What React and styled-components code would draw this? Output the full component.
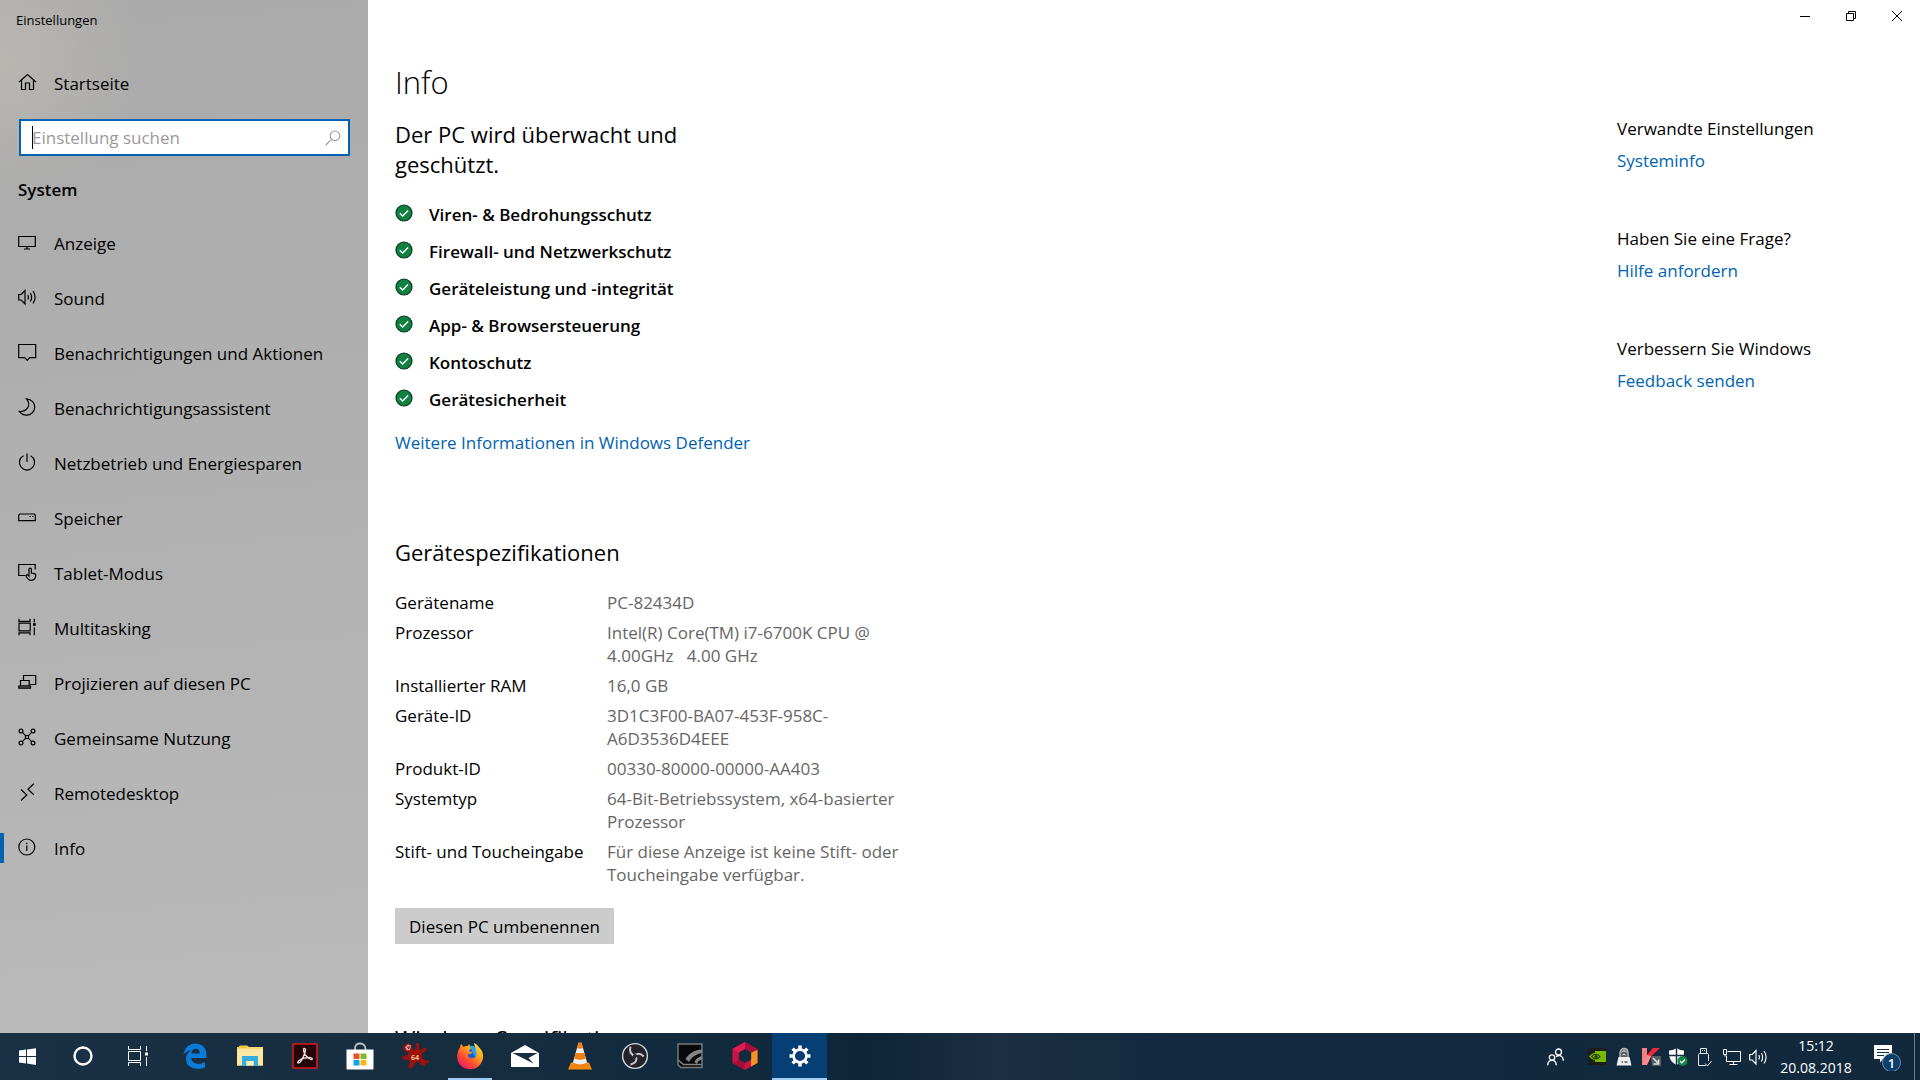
import React from "react";
import styled, { createGlobalStyle } from "styled-components";

const navItems = [
  { label: "Anzeige", icon: "display" },
  { label: "Sound", icon: "sound" },
  { label: "Benachrichtigungen und Aktionen", icon: "message" },
  { label: "Benachrichtigungsassistent", icon: "moon" },
  { label: "Netzbetrieb und Energiesparen", icon: "power" },
  { label: "Speicher", icon: "storage" },
  { label: "Tablet-Modus", icon: "tablet" },
  { label: "Multitasking", icon: "multitask" },
  { label: "Projizieren auf diesen PC", icon: "project" },
  { label: "Gemeinsame Nutzung", icon: "share" },
  { label: "Remotedesktop", icon: "remote" },
  { label: "Info", icon: "info", active: true },
];

const protections = [
  "Viren- & Bedrohungsschutz",
  "Firewall- und Netzwerkschutz",
  "Geräteleistung und -integrität",
  "App- & Browsersteuerung",
  "Kontoschutz",
  "Gerätesicherheit",
];

const specs = [
  ["Gerätename", "PC-82434D"],
  ["Prozessor", "Intel(R) Core(TM) i7-6700K CPU @ 4.00GHz \u00a0 4.00 GHz"],
  ["Installierter RAM", "16,0 GB"],
  ["Geräte-ID", "3D1C3F00-BA07-453F-958C-A6D3536D4EEE"],
  ["Produkt-ID", "00330-80000-00000-AA403"],
  ["Systemtyp", "64-Bit-Betriebssystem, x64-basierter Prozessor"],
  [
    "Stift- und Toucheingabe",
    "Für diese Anzeige ist keine Stift- oder Toucheingabe verfügbar.",
  ],
];

const related = [
  ["Verwandte Einstellungen", "Systeminfo"],
  ["Haben Sie eine Frage?", "Hilfe anfordern"],
  ["Verbessern Sie Windows", "Feedback senden"],
];

const App = () => {
  return (
    <>
      <GlobalStyle />
      <Desktop>
        <SettingsWindow>
          <Sidebar />
          <Main>
            <CaptionBar>
              <CaptionButton aria-label="Minimieren">
                <svg width="10" height="10" viewBox="0 0 10 10">
                  <path d="M0 5.5h10" stroke="#000" />
                </svg>
              </CaptionButton>
              <CaptionButton aria-label="Verkleinern">
                <svg width="10" height="10" viewBox="0 0 10 10">
                  <path
                    d="M.5 2.5h7v7h-7zM2.5 2.5v-2h7v7h-2"
                    fill="none"
                    stroke="#000"
                  />
                </svg>
              </CaptionButton>
              <CaptionButton aria-label="Schließen">
                <svg width="10" height="10" viewBox="0 0 10 10">
                  <path d="M0 0l10 10M10 0L0 10" stroke="#000" />
                </svg>
              </CaptionButton>
            </CaptionBar>
            <Page>
              <Content>
                <Title>Info</Title>
                <Subtitle>Der PC wird überwacht und geschützt.</Subtitle>
                <StatusList>
                  {protections.map((text) => (
                    <StatusItem key={text}>
                      <CheckBadge />
                      <span>{text}</span>
                    </StatusItem>
                  ))}
                </StatusList>
                <DefenderLink href="#defender">
                  Weitere Informationen in Windows Defender
                </DefenderLink>
                <SectionTitle>Gerätespezifikationen</SectionTitle>
                <SpecTable>
                  <tbody>
                    {specs.map(([name, value]) => (
                      <tr key={name}>
                        <SpecName scope="row">{name}</SpecName>
                        <SpecValue>{value}</SpecValue>
                      </tr>
                    ))}
                  </tbody>
                </SpecTable>
                <RenameButton>Diesen PC umbenennen</RenameButton>
                <SectionTitle>Windows-Spezifikationen</SectionTitle>
              </Content>
              <Related>
                {related.map(([heading, link]) => (
                  <RelatedGroup key={heading}>
                    <h3>{heading}</h3>
                    <Link href="#hilfe">{link}</Link>
                  </RelatedGroup>
                ))}
              </Related>
            </Page>
          </Main>
        </SettingsWindow>
        <Taskbar />
      </Desktop>
    </>
  );
};

const GlobalStyle = createGlobalStyle`
  * {
    box-sizing: border-box;
  }

  body {
    margin: 0;
    font-family: "Open Sans", "Noto Sans", sans-serif;
    font-size: 17px;
    line-height: 23px;
    color: #000;
    background: #fff;
    overflow: hidden;
  }

  button, input {
    font: inherit;
    color: inherit;
    border: 0;
    padding: 0;
    background: none;
  }

  svg {
    display: block;
    flex-shrink: 0;
  }
`;

const Desktop = styled.div`
  display: flex;
  flex-direction: column;
  height: 100vh;
`;

const SettingsWindow = styled.div`
  display: flex;
  flex: 1;
  min-height: 0;
  overflow: hidden;
`;

const Main = styled.main`
  flex: 1;
  display: flex;
  flex-direction: column;
  min-width: 0;
  overflow: hidden;
`;

const CaptionBar = styled.div`
  display: flex;
  justify-content: flex-end;
  flex-shrink: 0;
`;

const CaptionButton = styled.button`
  display: flex;
  align-items: center;
  justify-content: center;
  width: 46px;
  height: 32px;

  &:hover {
    background: #e5e5e5;
  }
`;

const Page = styled.div`
  display: flex;
  justify-content: space-between;
  flex: 1;
  min-height: 0;
  padding-left: 27px;
`;

const Content = styled.div`
  flex: 1;
  max-width: 520px;
  padding-top: 30px;
`;

const Title = styled.h1`
  margin: 0;
  font-size: 31px;
  font-weight: 300;
  line-height: 40px;
`;

const Subtitle = styled.h2`
  max-width: 300px;
  margin: 17px 0 0;
  font-size: 22px;
  font-weight: 400;
  line-height: 30px;
`;

const SectionTitle = styled(Subtitle)`
  margin-top: 79px;
`;

const StatusList = styled.ul`
  list-style: none;
  margin: 17px 0 13px;
  padding: 0;
`;

const StatusItem = styled.li`
  display: flex;
  align-items: center;
  gap: 16px;
  height: 37px;
  font-weight: 600;

  svg {
    margin-bottom: 4px;
  }
`;

const Link = styled.a`
  color: #0063b1;
  text-decoration: none;

  &:hover {
    color: #666;
  }
`;

const DefenderLink = styled(Link)`
  display: block;
  padding-bottom: 4px;
`;

const SpecTable = styled.table`
  width: 100%;
  margin-top: 24px;
  border-collapse: collapse;
`;

const SpecName = styled.th`
  width: 212px;
  padding: 0 0 7px;
  font-weight: 400;
  text-align: left;
  vertical-align: top;
`;

const SpecValue = styled.td`
  padding: 0 10px 7px 0;
  color: #666;
  vertical-align: top;
`;

const RenameButton = styled.button`
  display: block;
  height: 36px;
  margin-top: 15px;
  padding: 0 14px;
  background: #ccc;
`;

const Related = styled.aside`
  width: 303px;
  padding-top: 85px;
`;

const RelatedGroup = styled.section`
  margin-bottom: 55px;

  h3 {
    margin: 0 0 9px;
    font: inherit;
  }
`;

const CheckBadge = () => (
  <svg width="18" height="18" viewBox="0 0 18 18">
    <circle cx="9" cy="9" r="8" fill="#108043" stroke="#0b3a20" strokeWidth="1.2" />
    <path d="M4.8 9.2l2.9 2.8 5.4-5.4" fill="none" stroke="#fff" strokeWidth="1.4" />
  </svg>
);

/* Sidebar */

const Sidebar = () => {
  return (
    <SidebarPane>
      <WindowTitle>Einstellungen</WindowTitle>
      <HomeLink href="#start">
        <NavIcon name="home" />
        Startseite
      </HomeLink>
      <SearchBox>
        <input
          type="text"
          aria-label="Einstellung suchen"
          placeholder="Einstellung suchen"
          autoFocus
        />
        <svg width="16" height="16" viewBox="0 0 16 16">
          <g fill="none" stroke="#999" strokeWidth="1.1">
            <circle cx="10" cy="5.8" r="4.8" />
            <path d="M6.5 9.3L.8 15" />
          </g>
        </svg>
      </SearchBox>
      <GroupTitle>System</GroupTitle>
      <nav>
        {navItems.map((item) => (
          <NavLink href="#einstellung" key={item.label} $active={item.active}>
            <NavIcon name={item.icon} />
            {item.label}
          </NavLink>
        ))}
      </nav>
    </SidebarPane>
  );
};

const SidebarPane = styled.aside`
  width: 368px;
  flex-shrink: 0;
  background: radial-gradient(circle at 0 60px, #b9b7b2 0, rgba(184, 183, 180, 0) 140px),
    linear-gradient(175deg, #aaa 0%, #b0b0b0 45%, #bababa 100%);
`;

const WindowTitle = styled.div`
  padding: 9px 16px;
  font-size: 13px;
  line-height: 22px;
`;

const NavLink = styled.a`
  display: flex;
  align-items: center;
  gap: 17px;
  height: 55px;
  padding-left: 14px;
  border-left: 4px solid ${(props) => (props.$active ? "#0063b1" : "transparent")};
  border-image: ${(props) =>
    props.$active
      ? "linear-gradient(transparent 13px, #0063b1 13px, #0063b1 41px, transparent 41px) 1"
      : "none"};
  color: #000;
  text-decoration: none;

  svg {
    margin-bottom: 3px;
  }
`;

const HomeLink = styled(NavLink)`
  margin-top: 16px;
`;

/* ::before is the text caret, drawn so that it does not blink */
const SearchBox = styled.label`
  display: flex;
  align-items: center;
  height: 37px;
  margin: 8px 18px 0 19px;
  padding: 0 7px 0 11px;
  background: #fff;
  border: 2px solid #0063b1;

  &::before {
    content: "";
    width: 1px;
    height: 23px;
    margin-right: -1px;
    background: #000;
  }

  input {
    flex: 1;
    min-width: 0;
    outline: 0;
    caret-color: transparent;
  }

  input::placeholder {
    color: #999;
    opacity: 1;
  }
`;

const GroupTitle = styled.h2`
  margin: 22px 18px 15px;
  font-size: 17px;
  font-weight: 600;
  line-height: 23px;
`;

const navDrawings = {
  home: <path d="M1 9L9.500 1.500 18 9M3.500 7v9.500h4V10h4v6.500h4V7" />,
  display: <path d="M.7 3.500h16.600v10H.7zM9 13.500v2.500M6 16h6" />,
  sound: (
    <path d="M.7 6.500h2.500L7 2.500v13.500l-3.800-4H.7zM9.800 7c.8 1.500.8 3 0 4.500M12.300 5c1.700 2.700 1.700 5.800 0 8.500M15 3c2.700 4 2.700 8.500 0 12.500" />
  ),
  message: <path d="M.7 1.500h17v13.200h-6l-2.500 2.600-2.500-2.600h-6z" />,
  moon: <path d="M8.500.8c5 .5 8.500 4 8.300 8.500-.3 4.500-4 8-8.500 7.800-3 0-5.300-1.300-7-3.700 3.400.4 6.300-.6 8.100-3.200C11.500 7 10.900 3.500 8.500.8z" />,
  power: <path d="M9 .5v8.500M5.500 2.700a7.600 7.600 0 1 0 7 0" />,
  storage: <path d="M1.700 6h14.600l1 1.300v5.400H.7V7.300zM11.500 8.500h1.500M14 8.500h1.500" />,
  tablet: (
    <g>
      <path d="M7.500 12.500H.7V1.500h16.500v5" />
      <path d="M11 12V6.300c0-1.700 2.400-1.700 2.400 0V10l3 .6c1 .2 1.500.8 1.400 1.800-.3 3-1.600 4.900-4.500 4.900-2.500 0-3.800-1.300-5-3.800-.5-1.500 1-2.500 2.700-.5z" />
    </g>
  ),
  multitask: (
    <g>
      <path d="M1 .8v2.500h11V.8M1 17.300v-2.500h11v2.500M1 5.200h11.200v7.600H1zM16.300.8v3.700M16.300 9.500v7.800" />
      <path d="M15 5.200h2.700v2.600H15z" fill="currentColor" stroke="none" />
    </g>
  ),
  project: (
    <g>
      <path d="M5.500 7.500V2.500h12.200v9H12M2.500 7.500h8.700v5.500H2.500z" />
      <path d="M.8 13h11.700v2.200H.8z" fill="#777" />
    </g>
  ),
  share: (
    <g>
      <path d="M4.300 4.300l9.400 9.400M13.700 4.300l-9.400 9.400" />
      <circle cx="3" cy="3" r="1.900" />
      <circle cx="15" cy="3" r="1.900" />
      <circle cx="3" cy="15" r="1.900" />
      <circle cx="15" cy="15" r="1.900" />
      <path d="M7.500 7.500h3v3h-3z" fill="#aaa" />
    </g>
  ),
  remote: <path d="M3 6.500l5.800 5.500L3 17.500M15.800.8L10 6.300l5.800 5.500" />,
  info: (
    <g>
      <circle cx="8.800" cy="9" r="8" />
      <path d="M8.800 7.500v5.500M8.800 4.800v1.400" />
    </g>
  ),
};

const NavIcon = ({ name }) => (
  <svg
    width="19"
    height="18"
    viewBox="0 0 19 18"
    fill="none"
    stroke="currentColor"
    strokeWidth="1.200"
  >
    {navDrawings[name]}
  </svg>
);

/* Taskbar */

const Taskbar = () => {
  return (
    <Bar>
      <SystemButtons>
        <TaskButton aria-label="Start">
          <svg width="17" height="17" viewBox="0 0 17 17" fill="#fff">
            <path d="M0 2.600l7-1v6.500H0zM8 1.500L17 .2v7.900H8zM0 9h7v6.500l-7-1zM8 9h9v7.900L8 15.600z" />
          </svg>
        </TaskButton>
        <TaskButton aria-label="Cortana">
          <svg width="20" height="20" viewBox="0 0 20 20">
            <circle cx="10" cy="10" r="8.500" fill="none" stroke="#fff" strokeWidth="2.400" />
          </svg>
        </TaskButton>
        <TaskButton aria-label="Taskansicht">
          <svg width="20" height="20" viewBox="0 0 20 20" fill="none" stroke="#fff">
            <path d="M.5 0v3.500h12V0M.5 20v-3.500h12V20M.5 5.500h12v9H.5zM18.500 0v5M18.500 11v9" />
            <path d="M17 6.500h3v3h-3z" fill="#fff" stroke="none" />
          </svg>
        </TaskButton>
      </SystemButtons>
      <PinnedApps>
        <TaskButton aria-label="Microsoft Edge">
          <svg width="24" height="26" viewBox="0 0 24 26">
            <path
              d="M.5 11.800C1.300 5 6 .5 12.400.5 19.500.5 23.500 5.500 23.500 12v3H8.200c.2 4 3.600 5.800 7.500 5.800 2.500 0 4.500-.7 6.300-1.800v5.200c-2.200 1-4.700 1.600-7.400 1.600C7.300 25.800 3 21.800 3 16c0-4 2-7 5.500-8.700-3.500.3-6.300 2-8 4.500zM8.400 10.500h8.400c0-2.800-1.300-4.700-4-4.700-2.500 0-4 2-4.400 4.700z"
              fill="#0a7bd7"
            />
          </svg>
        </TaskButton>
        <TaskButton aria-label="Explorer">
          <svg width="26" height="22" viewBox="0 0 26 22">
            <path d="M0 2h1.500L3 .5h7L12 2h14v18.500H0z" fill="#f7d774" />
            <path d="M0 4h26v16.500H0z" fill="#fbe7a2" />
            <path d="M2 1h8v2H2z" fill="#f6c526" />
            <path d="M5 11h16v10h-4.500v-5h-7v5H5z" fill="#35aee2" />
            <path d="M9.500 16h7v4.500h-7z" fill="#fff2b8" />
          </svg>
        </TaskButton>
        <TaskButton aria-label="Adobe Acrobat">
          <svg width="26" height="26" viewBox="0 0 26 26">
            <path d="M1 1h24v24H1z" fill="#260508" stroke="#d91a1a" strokeWidth="1.600" />
            <path
              d="M12 5.500c2.200-.3 1.300 3.400.5 5.300-1.500 4.300-4.200 9.200-6 9.300-2.500-.2 1.600-4.400 6.200-5.100 3.800-.8 8.500-.5 7.500 1.300-1.300 1.300-5.700-2.500-7.200-4.900-1-2-2.200-5.500-1-5.900z"
              fill="none"
              stroke="#e5dcdc"
              strokeWidth="1.400"
            />
          </svg>
        </TaskButton>
        <TaskButton aria-label="Microsoft Store">
          <svg width="28" height="28" viewBox="0 0 28 28">
            <path d="M9 8V6.500C9 3 11 1.500 14 1.500S19.500 3.500 19.500 7v1" fill="none" stroke="#b9c6cf" strokeWidth="1.800" />
            <path d="M.5 7.500h27v19.200q0 .8-1 .8h-25q-1 0-1-.8z" fill="#fff" />
            <path d="M7.500 11.500h6v5.500h-6z" fill="#f04e24" />
            <path d="M14.500 11.500h6v5.500h-6z" fill="#7fb928" />
            <path d="M7.500 18h6v5.500h-6z" fill="#0fa5ea" />
            <path d="M14.500 18h6v5.500h-6z" fill="#fab710" />
          </svg>
        </TaskButton>
        <TaskButton aria-label="IrfanView">
          <svg width="28" height="28" viewBox="0 0 28 28">
            <path
              d="M2 6c0-3 3-5 6-4.500 2.500.5 3.500 3 3 6l3.500-.5V2.500c.5-2 3-2 3.500 0l.5 5.500 5-2c2-.5 3 1.500 1.500 2.800L21 11.500l.5 4.500c1.500 2 3 2.500 5 2 2 0 2 2 .5 3l-3 .8c.5 1.700-.5 2.700-1.500 2.200l-3-1.500-2-3-2.500.5-2.500 4c-1 2.500-4 3-5 1.500s1-3 1.500-5l-1-2.500L4 17.500c-2.500.5-4-1.500-2.500-3L6 13l2-2-3-1.500C3.500 9 2 8 2 6z"
              fill="#9a1210"
            />
            <path d="M4 5l3-2.500 3 1-1 4.500-3 .5z" fill="#d7a7a0" />
            <path d="M6 4.500l2 2M8.500 4l-1 3" stroke="#7c1010" />
            <text x="10" y="18" fontFamily="Open Sans, sans-serif" fontSize="7" fontWeight="700" fill="#f5c08a">
              64
            </text>
          </svg>
        </TaskButton>
        <TaskButton aria-label="Firefox" $running>
          <svg width="28" height="28" viewBox="0 0 28 28">
            <defs>
              <linearGradient id="fox" x1="1" y1="0" x2="0.200" y2="1">
                <stop offset="0" stopColor="#fff04a" />
                <stop offset="0.400" stopColor="#ffa318" />
                <stop offset="0.700" stopColor="#ff4a30" />
                <stop offset="1" stopColor="#ed1277" />
              </linearGradient>
            </defs>
            <circle cx="14.500" cy="14" r="10" fill="#145fd2" />
            <path d="M14 4c5-1 10 3 10 8l-5 3z" fill="#20a7ef" />
            <path
              d="M4 5.500C4 4 4.500 2.500 5.200 2l2.300 3c1.300-1 2.500-1.200 4-1l2-2c-.2 2 .7 3.500 2 4l-2.800 2.700c1.100 1 2.300 1 4.300 1-1 2-3.500 2.300-5.500 3 .8 4 6.500 4.500 8.500 1.500 1.600-3-.2-6-1-7l1.300.2C19.500 5 18 3 18 1c2 .5 4 2.500 5 4.200C26 8 27.500 11.500 27 15.500 26.300 22.500 21 27.300 14 27.300S1.200 22 1.200 15C1.200 11 2.200 8 4 5.500z"
              fill="url(#fox)"
            />
          </svg>
        </TaskButton>
        <TaskButton aria-label="Mail">
          <svg width="28" height="24" viewBox="0 0 28 24">
            <path d="M0 9L14 1l14 8v14H0z" fill="#fff" />
            <path d="M1.500 9h25L17.500 14l5 5.500z" fill="#172d40" />
          </svg>
        </TaskButton>
        <TaskButton aria-label="VLC">
          <svg width="24" height="28" viewBox="0 0 24 28">
            <path d="M3 20.500h18l3 7H0z" fill="#f48910" />
            <path d="M10.500.8h3L19.500 22q-7.500 4.500-15 0z" fill="#eee" />
            <path d="M10.500.8h3L15 6q-3 1.300-6 0zM7.600 11h8.800l1.500 5.500q-6 2.600-11.800 0zM5 20.500q7 4 14 0l.7 2.700q-7.700 4-15.400 0z" fill="#f07f10" />
          </svg>
        </TaskButton>
        <TaskButton aria-label="OBS Studio">
          <svg width="28" height="28" viewBox="0 0 28 28">
            <circle cx="14" cy="14" r="12.400" fill="#252329" stroke="#d2d7da" strokeWidth="1.400" />
            <g fill="none" stroke="#c9cacd" strokeWidth="2">
              <path d="M9.500 4.800c-1.500 5 .5 8 5 9.500" />
              <path d="M22.700 14.500c-3.500-3.700-7-3.500-10.200 0" />
              <path d="M9.500 22.500c5-.8 7-4.200 5.500-8.500" />
            </g>
            <circle cx="14" cy="14" r="2" fill="#252329" />
          </svg>
        </TaskButton>
        <TaskButton aria-label="GeForce Experience">
          <svg width="26" height="26" viewBox="0 0 26 26">
            <path d="M1 1h24v23.500H4L1 22z" fill="#090909" stroke="#77797b" strokeWidth="1.500" />
            <path d="M25 6.500C17 7 12 10.500 8.500 16l3.500 3C14.500 14 18.500 11.500 25 10zM25 13c-4 1-6.500 3-7.500 6l2.500 2 1.500-3 3.500-1.500z" fill="#858585" />
            <path d="M1 17l5.500 4.500H25" fill="none" stroke="#858585" strokeWidth="1.500" />
          </svg>
        </TaskButton>
        <TaskButton aria-label="Toolbox">
          <svg width="26" height="28" viewBox="0 0 26 28">
            <path d="M13 0l12.500 7v14L13 28 .5 21V7z" fill="#cf1445" />
            <path d="M13 0l12.500 7-6.300 3.500L13 7z" fill="#a70d3c" />
            <path d="M.5 7L13 0v7L6.800 10.500z" fill="#e51c50" />
            <path d="M.5 21l6.300-3.500L13 21v7z" fill="#a70d3c" />
            <path d="M25.500 8v13L19 24.600V10.800z" fill="#f39324" />
            <path d="M13 7l6.200 3.500v7L13 21l-6.200-3.500v-7z" fill="#132b3d" />
          </svg>
        </TaskButton>
        <TaskButton aria-label="Einstellungen" $running $current>
          <svg width="22" height="22" viewBox="0 0 22 22">
            <circle cx="11" cy="11" r="6.400" fill="none" stroke="#fff" strokeWidth="2.600" />
            <path
              d="M11 .5v4M11 17.500v4M.5 11h4M17.500 11h4M3.600 3.600l2.800 2.800M15.600 15.600l2.800 2.800M18.400 3.600l-2.800 2.800M6.400 15.600l-2.800 2.800"
              stroke="#fff"
              strokeWidth="3.400"
            />
          </svg>
        </TaskButton>
      </PinnedApps>
      <Tray />
    </Bar>
  );
};

const Tray = () => (
  <TrayArea>
    <PeopleButton aria-label="Kontakte">
      <svg width="17" height="18" viewBox="0 0 17 18" fill="none" stroke="#fff" strokeWidth="1.300">
        <circle cx="5" cy="9.500" r="2.700" />
        <circle cx="11.500" cy="4" r="3" />
        <path d="M.8 17.300c0-6.500 8.400-6.500 8.400 0M9 8.700c3.500-2.600 7.300-.5 7.300 4" />
      </svg>
    </PeopleButton>
    <TrayButton aria-label="NVIDIA">
      <svg width="18" height="17" viewBox="0 0 18 17">
        <path d="M0 0h18v17H0z" fill="#1b1e1c" />
        <path d="M7 3h11v11H7z" fill="#76b900" />
        <path d="M1 8.500C4 3.500 11 3.500 14 8c-3 5-9.500 5.500-13 .5z" fill="#76b900" />
        <path d="M3.500 8.500c2-3 6.500-3 8.500 0-2 3-6 3.300-8.500 0z" fill="none" stroke="#25340d" strokeWidth="1.200" />
        <circle cx="8" cy="8.500" r="1.500" fill="#25340d" />
      </svg>
    </TrayButton>
    <TrayButton aria-label="Sicherheit">
      <svg width="16" height="20" viewBox="0 0 16 20">
        <path d="M4 12V6c0-6 8-6 8 0v6" fill="#59605e" stroke="#bbb" strokeWidth="1.400" />
        <path d="M5.500 5c1.500-1.500 3.500-1.500 5 0M6.500 8c1-1 2-1 3 0" fill="none" stroke="#fff" />
        <path d="M2.500 10h11l2 8.500H.5z" fill="#eee" />
        <path d="M5.500 15h1.500M8.500 15h3" stroke="#555" strokeWidth="1.500" />
      </svg>
    </TrayButton>
    <TrayButton aria-label="Kaspersky">
      <svg width="20" height="20" viewBox="0 0 20 20">
        <path d="M1 1h5v7l6-7h7l-8.500 8L6 18H1z" fill="#ee2a35" />
        <path d="M6 8l-5 10h5l4-9z" fill="#f58b90" />
        <path d="M1 1h5v7L1 18z" fill="#fff" opacity="0.400" />
        <path d="M10 9h10v10h-9z" fill="#555d61" />
        <path d="M12 11l5.500 5.500M17.500 12.500v4.500h-5" fill="none" stroke="#ddd" strokeWidth="1.600" />
      </svg>
    </TrayButton>
    <TrayButton aria-label="Windows Defender">
      <svg width="20" height="20" viewBox="0 0 20 20">
        <path d="M8.500 1Q12 3.500 16 3.500c0 6-.5 11-7.500 14.500C1.500 14.500 1 9.500 1 3.500Q5 3.500 8.500 1z" fill="#fff" />
        <path d="M8.500 1v17M1 8.500h15" stroke="#172d40" strokeWidth="1.500" />
        <circle cx="14.500" cy="14" r="5" fill="#158345" />
        <path d="M12 14l1.800 1.800 3.200-3.300" fill="none" stroke="#fff" strokeWidth="1.200" />
      </svg>
    </TrayButton>
    <TrayButton aria-label="Hardware sicher entfernen">
      <svg width="15" height="20" viewBox="0 0 15 20" fill="none" stroke="#dfe5e9">
        <path d="M3.500 6.500v-5h6v5M9 18.500H1.500v-11q0-1 1-1h8q1 0 1 1V14M5 3.500h1M7 3.500h1" />
        <path d="M8 16.500l2.500 2.500 4-5" />
      </svg>
    </TrayButton>
    <TrayButton aria-label="Netzwerk">
      <svg width="20" height="18" viewBox="0 0 20 18" fill="none" stroke="#fff">
        <path d="M5.500 3.500h13v10h-14V7.500M11.500 13.500v3M7.500 16.500h8" />
        <path d="M1.500 1.500h3v5h-3zM3 6.500v2" />
      </svg>
    </TrayButton>
    <TrayButton aria-label="Lautstärke">
      <svg width="19" height="18" viewBox="0 0 19 18" fill="none" stroke="#fff" strokeWidth="1.100">
        {navDrawings.sound}
      </svg>
    </TrayButton>
    <Clock>
      <time>15:12</time>
      <time>20.08.2018</time>
    </Clock>
    <ActionCenter aria-label="Info-Center">
      <svg width="28" height="28" viewBox="0 0 28 28">
        <path d="M1 2h18v14h-9l-3 3.500V16H1z" fill="#fff" />
        <path d="M4 6.500h12M4 9.500h12M4 12.500h7" stroke="#172d40" strokeWidth="1.200" />
        <circle cx="18.500" cy="19.500" r="9" fill="#0e3f6c" stroke="#6a92b4" />
        <text x="18.500" y="24.500" fill="#fff" fontFamily="Open Sans, sans-serif" fontSize="13" fontWeight="600" textAnchor="middle">
          1
        </text>
      </svg>
    </ActionCenter>
    <ShowDesktop aria-label="Desktop anzeigen" />
  </TrayArea>
);

const Bar = styled.footer`
  display: flex;
  height: 47px;
  flex-shrink: 0;
  color: #fff;
  background: linear-gradient(
    90deg,
    #1a3044 0%,
    #162d40 25%,
    #10293d 42%,
    #0d2438 45%,
    #1c2f44 52%,
    #112a3f 61%,
    #12293d 100%
  );
`;

const SystemButtons = styled.div`
  display: flex;
  margin-right: 2px;
`;

const PinnedApps = styled.div`
  display: flex;
  flex: 1;
`;

const TaskButton = styled.button`
  display: flex;
  align-items: center;
  justify-content: center;
  width: 55px;
  height: 47px;
  padding-bottom: 1px;
  background-color: ${(props) => (props.$current ? "#053f73" : "transparent")};
  background-image: ${(props) =>
    props.$running ? "linear-gradient(#9dcbf3, #9dcbf3)" : "none"};
  background-repeat: no-repeat;
  background-position: bottom;
  background-size: ${(props) => (props.$current ? "100% 2px" : "44px 2px")};
`;

const TrayArea = styled.div`
  display: flex;
`;

const TrayButton = styled.button`
  display: flex;
  align-items: center;
  justify-content: center;
  width: 27px;
`;

const PeopleButton = styled(TrayButton)`
  margin-right: 14px;
`;

const Clock = styled.button`
  display: flex;
  flex-direction: column;
  align-items: center;
  justify-content: center;
  width: 88px;
  font-size: 14px;
  line-height: 22px;
`;

const ActionCenter = styled(TrayButton)`
  width: 54px;
`;

const ShowDesktop = styled.button`
  width: 6px;
  border-left: 1px solid #6c7c89;
`;

export default App;
